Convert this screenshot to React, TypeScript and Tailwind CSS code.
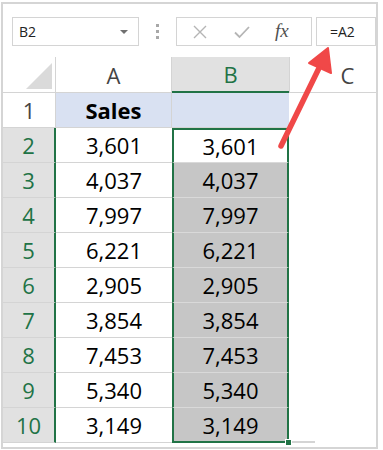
import React from 'react';

const rows = ['3,601', '4,037', '7,997', '6,221', '2,905', '3,854', '7,453', '5,340', '3,149'];

const font = { fontFamily: '"Open Sans", "Liberation Sans", sans-serif' };

export default function App() {
  return (
    <div className="w-[383px] h-[450px] bg-white pt-[2px] pl-[1px]" style={font}>
      <div className="relative w-[377px] h-[447px] border-2 border-[#d5d5d5] overflow-hidden">
        {/* Formula bar */}
        <div className="flex items-start h-[53px] pt-[13px] pl-[9px]">
          <div className="w-[127px] h-[29px] border border-[#d4d4d4] flex items-center justify-between pl-[6px] pr-[10px]">
            <span className="text-[14px] text-[#222]">B2</span>
            <span className="w-0 h-0 border-l-[4px] border-r-[4px] border-t-[4px] border-l-transparent border-r-transparent border-t-[#707070]" />
          </div>
          <div className="w-[37px] h-[29px] flex flex-col items-center justify-center gap-[3px]">
            <span className="w-[3px] h-[3px] bg-[#a8a8a8]" />
            <span className="w-[3px] h-[3px] bg-[#a8a8a8]" />
            <span className="w-[3px] h-[3px] bg-[#a8a8a8]" />
          </div>
          <div className="w-[136px] h-[29px] border border-[#d4d4d4] flex items-center">
            <svg className="ml-[16px]" width="14" height="14" viewBox="0 0 14 14">
              <path d="M1 1L13 13M13 1L1 13" stroke="#b5b5b5" strokeWidth="1.4" fill="none" />
            </svg>
            <svg className="ml-[27px]" width="16" height="14" viewBox="0 0 16 14">
              <path d="M1 7.5L5.5 12L15 2" stroke="#b5b5b5" strokeWidth="1.8" fill="none" />
            </svg>
            <span
              className="ml-[25px] text-[19px] italic text-[#505050]"
              style={{ fontFamily: '"Liberation Serif", "DejaVu Serif", serif' }}
            >
              fx
            </span>
          </div>
          <div className="ml-[4px] flex-1 h-[29px] border border-[#d4d4d4] flex items-center pl-[13px]">
            <span className="text-[14px] text-[#222]">=A2</span>
          </div>
        </div>

        {/* Grid */}
        <div className="grid grid-cols-[53px_116px_117px_116px] grid-rows-[36px_repeat(10,35px)] text-[22px] leading-none">
          {/* header row */}
          <div className="relative bg-white border-b border-r border-[#d4d4d4]">
            <span className="absolute right-[3px] bottom-[3px] w-0 h-0 border-l-[26px] border-t-[26px] border-l-transparent border-t-transparent border-b-0 border-r-0 [border-bottom:26px_solid_#dadada]" />
          </div>
          <div className="flex items-center justify-center bg-white border-b border-r border-[#d4d4d4] text-[#444]">A</div>
          <div className="flex items-center justify-center bg-[#e1e1e1] border-b-2 border-b-[#217346] text-[#217346]">B</div>
          <div className="flex items-center justify-center bg-white border-b border-l border-[#d4d4d4] text-[#444]">C</div>

          {/* row 1 */}
          <div className="flex items-center justify-center bg-white border-b border-r border-[#d4d4d4] text-[#444]">1</div>
          <div className="flex items-center justify-center bg-[#d9e1f2] border-b border-r border-[#d4d4d4] font-bold text-black">Sales</div>
          <div className="bg-[#d9e1f2] border-b border-[#d4d4d4]" />
          <div className="bg-white" />

          {rows.map((v, i) => {
            const first = i === 0;
            const last = i === rows.length - 1;
            return (
              <React.Fragment key={i}>
                <div className="flex items-center justify-center bg-[#e1e1e1] border-b border-b-[#d4d4d4] border-r-2 border-r-[#217346] text-[#217346]">
                  {i + 2}
                </div>
                <div className="flex items-center justify-center bg-white border-b border-[#d4d4d4] text-black">{v}</div>
                <div
                  className={
                    'relative flex items-center justify-center border-x-2 border-x-[#217346] text-black ' +
                    (first ? 'bg-white border-t-2 border-t-[#217346] ' : 'bg-[#c6c6c6] ') +
                    (last ? 'border-b-2 border-b-[#217346]' : 'border-b border-b-[#d9d9d9]')
                  }
                >
                  {v}
                  {last && (
                    <span className="absolute right-[-5px] bottom-[-5px] w-[7px] h-[7px] bg-[#217346] border border-white" />
                  )}
                </div>
                <div className={'bg-white ' + (last ? 'border-b-2 border-b-[#d4d4d4] mr-[90px]' : '')} />
              </React.Fragment>
            );
          })}
        </div>

        {/* red arrow */}
        <svg className="absolute left-0 top-0 pointer-events-none" width="377" height="447" viewBox="0 0 377 447">
          <g transform="translate(-3 -4)">
            <path d="M281 146L320 66" stroke="#f04848" strokeWidth="5.5" strokeLinecap="round" fill="none" />
            <path d="M328 48L309 63L331 73Z" fill="#f04848" stroke="#f04848" strokeWidth="2" strokeLinejoin="round" />
          </g>
        </svg>
      </div>
    </div>
  );
}
